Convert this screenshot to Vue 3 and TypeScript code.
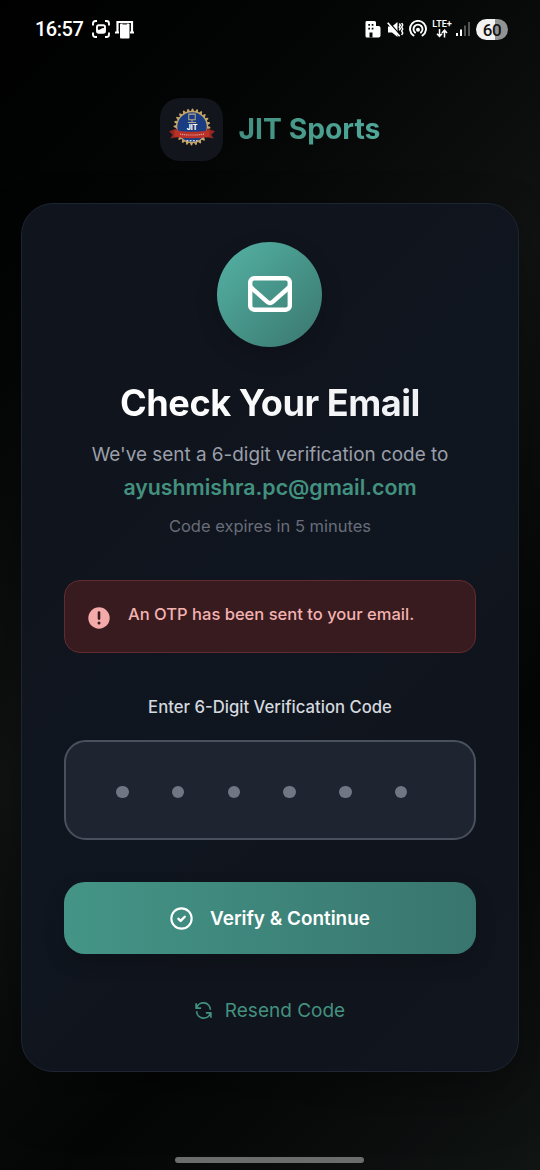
<script setup lang="ts">
import { ref } from 'vue'

const email = ref<string>('ayushmishra.pc@gmail.com')
const codeLength = 6

const point = (radius: number, index: number, count: number): string => {
  const a = (index / count) * Math.PI * 2
  return `${(50 + Math.cos(a) * radius).toFixed(2)},${(43 + Math.sin(a) * radius).toFixed(2)}`
}

const gearPoints: string = Array.from({ length: 96 }, (_, i) =>
  point(i % 4 < 2 ? 40 : 35, i, 96),
).join(' ')
</script>

<template>
  <div class="screen">
    <header class="status">
      <div class="status-left">
        <span class="clock">16:57</span>
        <svg class="ic-capture" viewBox="0 0 18 18" fill="none" stroke="#fff" stroke-width="1.9">
          <path d="M1 5.5V3.5Q1 1 3.5 1H5M13 1h1.5Q17 1 17 3.5v2M17 12.5v2Q17 17 14.5 17H13M5 17H3.5Q1 17 1 14.5v-2" />
          <rect x="5" y="5.3" width="8" height="7.4" rx="1.8" />
          <path d="M5.5 10l2.500-.5 2-1.300 2.500-.2V12h-7z" fill="#fff" stroke="none" />
        </svg>
        <svg class="ic-devices" viewBox="0 0 20 19" fill="none">
          <path d="M2.5 12V2H17v10" stroke="#fff" stroke-width="2.2" />
          <path d="M0 12.5h4M15 12.5h4" stroke="#fff" stroke-width="1.8" />
          <rect x="5" y="3.5" width="9.5" height="15" rx="1" fill="#fff" />
          <path d="M7.500 4h4.500" stroke="#222" stroke-width="1" />
        </svg>
      </div>
      <div class="status-right">
        <svg class="ic-building" viewBox="0 0 16 17">
          <path d="M1.5 0H9.5Q11 0 11 1.5V5h2.5Q15.5 5 15.5 7v7.5Q15.500 16.5 13.5 16.5H2Q.5 16.5.5 15V1.5Q.5 0 1.500 0z" fill="#fff" />
          <path d="M3.300 3h1.700v1.700H3.300zM6.700 3h1.700v1.700h-1.700zM3.300 6.700h1.700v1.700H3.300zM6.700 6.700h1.700v1.700h-1.700zM4.500 11.500h3v5h-3z" fill="#080808" />
        </svg>
        <svg class="ic-mute" viewBox="0 0 17 17" fill="none" stroke="#fff">
          <path d="M1 5.500h4L10.500 1v15L5 11.500H1z" fill="#fff" stroke="none" />
          <path d="M1.500.800l11.500 13" stroke="#050505" stroke-width="1.400" />
          <path d="M.7 1.800l12 13.400" stroke-width="1.700" />
          <path d="M12.300 2.500l1 1.700-1 1.700 1 1.700-1 1.700M14.700 2l1 2-1 2 1 2-1 2 1 2-1 2" stroke-width="1.500" />
        </svg>
        <svg class="ic-hotspot" viewBox="0 0 18 18" fill="none" stroke="#fff" stroke-width="1.9">
          <path d="M4.5 15.5A8 8 0 1 1 13.5 15.5M6 12.5A4.500 4.500 0 1 1 12 12.5" stroke-linecap="round" />
          <circle cx="9" cy="9.7" r="2" fill="#fff" stroke="none" />
        </svg>
        <div class="lte">
          <span>LTE+</span>
          <svg viewBox="0 0 12 9" fill="none" stroke="#fff" stroke-width="1.5">
            <path d="M3.5 0v7M1 4.8L3.5 7.5 6 4.8M8.5 8.5V1.5M6 4L8.5 1.2 11 4" />
          </svg>
        </div>
        <svg class="ic-signal" viewBox="0 0 14 14">
          <path d="M0 11h2v3H0zM4 7.500h2V14H4z" fill="#fff" />
          <path d="M8 3.5h2V14H8zM12 0h2v14h-2z" fill="#555" />
        </svg>
        <span class="battery">60</span>
      </div>
    </header>

    <div class="brand">
      <div class="logo">
        <svg viewBox="0 0 100 86">
          <polygon :points="gearPoints" fill="#c4a568" />
          <circle cx="50" cy="43" r="32" fill="#193c82" />
          <path d="M43 15h14v12H43zM50 27v6M41 33h18" fill="none" stroke="#b8aa86" stroke-width="2.2" />
          <text x="50" y="50" class="logo-name">JIT</text>
          <path d="M0 52L17 46 22 65 3 68 8 60zM100 52L83 46 78 65 97 68 92 60z" fill="#93261f" />
          <path d="M12 50Q50 57 88 50V64Q50 71 12 64z" fill="#b9322a" />
          <path d="M24 58.500Q50 62.500 76 58.500" fill="none" stroke="#e7aaa2" stroke-width="2.5" stroke-dasharray="2.5 2" />
          <path d="M38 72.500h24" stroke="#d5ddec" stroke-width="3" stroke-dasharray="4 3" />
        </svg>
      </div>
      <span class="brand-name">JIT Sports</span>
    </div>

    <main class="card">
      <div class="mail-badge">
        <svg viewBox="0 0 44 36" fill="none" stroke="#fff" stroke-width="4.4" stroke-linecap="round" stroke-linejoin="round">
          <rect x="2.2" y="2.3" width="39.6" height="31.4" rx="4" />
          <path d="M2.5 11L19.3 25.900Q22 28.2 24.7 25.900L41.5 11" />
        </svg>
      </div>
      <h1><span>Check Your Email</span></h1>
      <p class="lead">We've sent a 6-digit verification code to</p>
      <p class="email">{{ email }}</p>
      <p class="expiry">Code expires in 5 minutes</p>

      <div class="alert">
        <svg viewBox="0 0 22 22">
          <circle cx="11" cy="11" r="10.7" fill="#f3aaa9" />
          <path d="M11 5.6v6" stroke="#381b1f" stroke-width="2.6" stroke-linecap="round" />
          <circle cx="11" cy="16" r="1.5" fill="#381b1f" />
        </svg>
        <span>An OTP has been sent to your email.</span>
      </div>

      <label class="code-label">Enter 6-Digit Verification Code</label>
      <div class="code-input">
        <i v-for="n in codeLength" :key="n" class="dot"></i>
      </div>

      <button class="verify" type="button">
        <svg viewBox="0 0 24 24" fill="none" stroke="#fff" stroke-width="2.2" stroke-linecap="round" stroke-linejoin="round">
          <circle cx="12" cy="12" r="10.6" />
          <path d="M8.8 12.3l2.3 2.2 4.3-4.300" stroke-width="2.500" />
        </svg>
        <span>Verify &amp; Continue</span>
      </button>

      <button class="resend" type="button">
        <svg viewBox="0 0 18 18" fill="none" stroke="#43917f" stroke-width="1.8" stroke-linejoin="round">
          <path d="M1.2 1.2v5.3h5.3M1.7 6A7.5 7.5 0 0 1 16.3 8.2M16.8 16.8v-5.3h-5.3M16.3 12A7.5 7.5 0 0 1 1.7 9.8" />
        </svg>
        <span>Resend Code</span>
      </button>
    </main>

    <div class="home-bar"></div>
  </div>
</template>

<style>
html,
body {
  margin: 0;
  background: #000;
}
</style>

<style scoped>
* {
  box-sizing: border-box;
}
.screen {
  width: 540px;
  height: 1170px;
  overflow: hidden;
  display: flex;
  flex-direction: column;
  align-items: center;
  font-family: Inter, "Liberation Sans", sans-serif;
  background: linear-gradient(135deg, #000 0%, #040505 22%, #101312 46%, #040505 72%, #101413 100%);
}
svg {
  display: block;
  flex: none;
}
p,
h1 {
  margin: 0;
  white-space: nowrap;
}
span {
  white-space: nowrap;
}
.status {
  width: 100%;
  height: 58px;
  padding: 0 32px 0 35px;
  display: flex;
  align-items: center;
  justify-content: space-between;
  flex: none;
}
.status-left,
.status-right {
  display: flex;
  align-items: center;
}
.clock {
  font: 500 20px/24px Roboto, sans-serif;
  letter-spacing: -0.5px;
  color: #fff;
  width: 57px;
}
.ic-capture {
  width: 18px;
  height: 18px;
}
.ic-devices {
  width: 20px;
  height: 19px;
  margin-left: 5px;
}
.ic-building {
  width: 16px;
  height: 17px;
}
.ic-mute {
  width: 17px;
  height: 17px;
  margin-left: 6px;
}
.ic-hotspot {
  width: 18px;
  height: 18px;
  margin-left: 5px;
}
.lte {
  width: 20px;
  margin-left: 5px;
  display: flex;
  flex-direction: column;
  align-items: center;
  color: #fff;
  font: 600 9px/9px Roboto, sans-serif;
}
.lte svg {
  width: 12px;
  height: 9px;
}
.ic-signal {
  width: 14px;
  height: 14px;
  margin-left: 4px;
}
.battery {
  width: 32px;
  height: 21px;
  margin-left: 6px;
  border-radius: 11px;
  text-align: center;
  color: #111;
  font: 500 17px/22px Roboto, sans-serif;
  letter-spacing: -0.5px;
  background: linear-gradient(90deg, #f2f2f2 60%, #929292 60%);
}
.brand {
  height: 63px;
  margin-top: 40px;
  display: flex;
  align-items: center;
  gap: 16px;
  flex: none;
}
.logo {
  width: 63px;
  height: 63px;
  border-radius: 20px;
  background: #12151c;
  display: flex;
  align-items: center;
  justify-content: center;
}
.logo svg {
  width: 46px;
  height: 40px;
  margin: -6px 0 0 1px;
}
.logo-name {
  font: 800 15px Inter, sans-serif;
  fill: #fff;
  text-anchor: middle;
}
.brand-name {
  margin-top: -1px;
  font-size: 28.3px;
  font-weight: 700;
  line-height: 36px;
  background: linear-gradient(90deg, #438f81, #50a999);
  background-clip: text;
  color: transparent;
}
.card {
  width: 498px;
  height: 869px;
  margin-top: 42px;
  padding: 38px 42px 0;
  border: 1px solid #1d2532;
  border-radius: 32px;
  flex: none;
  display: flex;
  flex-direction: column;
  align-items: center;
  background: linear-gradient(135deg, #10141c 0%, #10141d 30%, #0f1620 50%, #10141c 70%, #10151e 100%);
  box-shadow: 0 25px 55px rgba(0, 0, 0, 0.3);
}
.mail-badge {
  width: 105px;
  height: 105px;
  margin-right: 1px;
  border-radius: 50%;
  display: flex;
  align-items: center;
  justify-content: center;
  background: linear-gradient(135deg, #54b3a5, #3a766e);
  box-shadow: 0 8px 22px rgba(0, 0, 0, 0.18);
  flex: none;
}
.mail-badge svg {
  width: 44px;
  height: 36px;
  margin: -1px 0 0 1px;
}
h1 {
  height: 44px;
  margin-top: 34px;
  font-size: 36.2px;
  font-weight: 700;
  letter-spacing: -0.5px;
  line-height: 44px;
}
h1 span {
  display: block;
  color: transparent;
  background: linear-gradient(90deg, #fff, #f0f1f4);
  background-clip: text;
}
.lead {
  margin-top: 16px;
  height: 28px;
  font-size: 18.9px;
  line-height: 28px;
  color: #9a9faa;
}
.email {
  margin-top: 3px;
  height: 30px;
  font-size: 21.3px;
  font-weight: 600;
  line-height: 30px;
  color: #43917f;
}
.expiry {
  margin-top: 11px;
  height: 26px;
  font-size: 16.5px;
  line-height: 26px;
  color: #686d79;
}
.alert {
  width: 412px;
  height: 73px;
  margin-top: 41px;
  padding: 0 23px;
  border: 1px solid #612b30;
  border-radius: 16px;
  display: flex;
  align-items: center;
  background: #381b1f;
  flex: none;
}
.alert svg {
  width: 22px;
  height: 22px;
  margin-top: 3px;
}
.alert span {
  margin: -5px 0 0 18px;
  font-size: 16.55px;
  font-weight: 500;
  line-height: 26px;
  color: #f3b2b0;
}
.code-label {
  margin-top: 41px;
  height: 26px;
  font-size: 16.7px;
  font-weight: 500;
  line-height: 26px;
  color: #d4d8df;
}
.code-input {
  width: 412px;
  height: 100px;
  margin-top: 20px;
  padding: 4px 0 0 50px;
  border: 2px solid #4a515e;
  border-radius: 22px;
  display: flex;
  align-items: center;
  gap: 43.3px;
  background: #1e2430;
  flex: none;
}
.dot {
  width: 12.5px;
  height: 12.5px;
  border-radius: 50%;
  background: #727684;
}
button {
  border: 0;
  padding: 0;
  font-family: inherit;
  display: flex;
  align-items: center;
  justify-content: center;
  flex: none;
}
.verify {
  width: 412px;
  height: 72px;
  margin-top: 42px;
  gap: 17px;
  border-radius: 21px;
  color: #fff;
  font-size: 18.9px;
  font-weight: 600;
  background: linear-gradient(90deg, #449587, #38756e);
  box-shadow: 0 8px 20px rgba(0, 0, 0, 0.18);
}
.verify svg {
  width: 23px;
  height: 23px;
}
.resend {
  height: 32px;
  margin-top: 40px;
  gap: 13px;
  color: #43917f;
  background: none;
  font-size: 19px;
}
.resend svg {
  width: 17px;
  height: 17px;
}
.home-bar {
  width: 189px;
  height: 6px;
  margin: 85px 1px 0 0;
  border-radius: 3px;
  background: #6b6d6c;
  flex: none;
}
</style>
